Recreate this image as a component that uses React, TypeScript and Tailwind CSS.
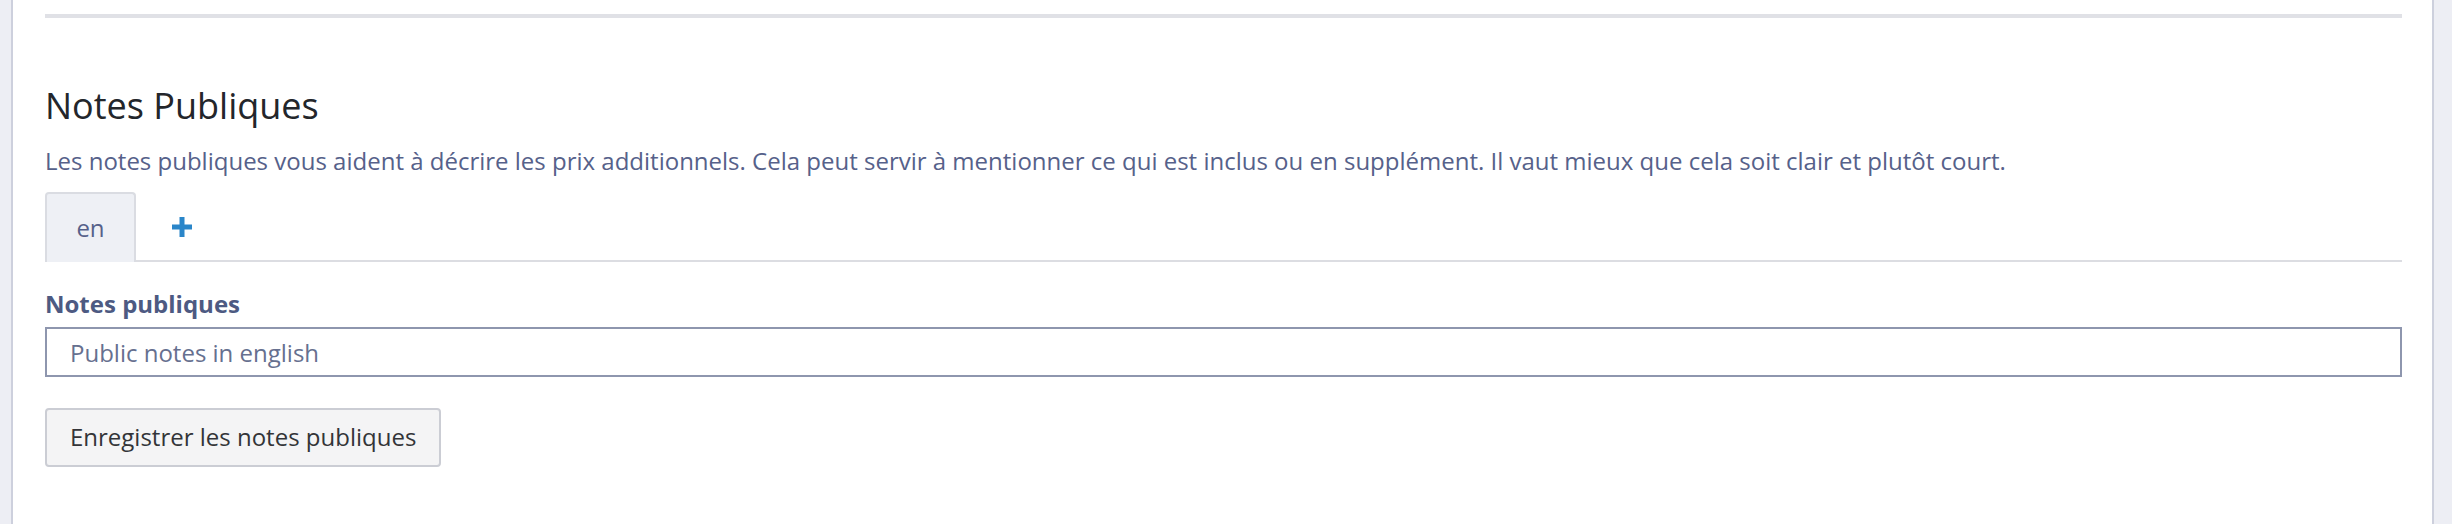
export default function App() {
  return (
    <div className="flex h-[524px] w-full bg-white font-['Open_Sans',sans-serif]">
      {/* left rail */}
      <div className="w-[13px] shrink-0 border-r-2 border-[#cdd0dd] bg-[#edeef4]" />

      <main className="flex-1 pl-[32px] pr-[30px]">
        <div className="mt-[14px] h-[4px] bg-[#e0e1e6]" />

        <section className="pt-[66px]">
          <h2 className="text-[36px] leading-[44px] text-[#23262b]">Notes Publiques</h2>
          <p className="mt-[15px] text-[24px] leading-[36px] text-[#56618a]">
            Les notes publiques vous aident à décrire les prix additionnels. Cela peut servir à mentionner ce qui est
            inclus ou en supplément. Il vaut mieux que cela soit clair et plutôt court.
          </p>

          {/* language tabs */}
          <div className="mt-[13px] flex h-[70px] border-b-2 border-[#dcdde2]">
            <button className="h-[70px] w-[91px] rounded-t-[4px] border-2 border-b-0 border-[#dadce2] bg-[#eef0f5] text-[24px] leading-[36px] text-[#56618a]">
              en
            </button>
            <button className="flex h-[68px] items-center px-[36px] pt-[2px] text-[#2a86c9]">
              <svg width="20" height="20" viewBox="0 0 20 20" fill="currentColor">
                <rect x="0" y="7.5" width="20" height="5" />
                <rect x="7.5" y="0" width="5" height="20" />
              </svg>
            </button>
          </div>

          <label className="mt-[24px] block text-[24px] font-bold leading-[36px] text-[#4d5a82]">Notes publiques</label>
          <input
            defaultValue="Public notes in english"
            className="mt-[5px] block h-[50px] w-full border-2 border-[#8e96ae] px-[23px] text-[24px] text-[#66708f] outline-none"
          />

          <button className="mt-[31px] h-[59px] rounded-[4px] border-2 border-[#cbcdd4] bg-[#f4f4f5] px-[23px] pb-[2px] text-[24px] text-[#333438]">
            Enregistrer les notes publiques
          </button>
        </section>
      </main>

      {/* right rail */}
      <div className="w-[20px] shrink-0 border-l-2 border-[#cdd0dd] bg-[#edeef4]" />
    </div>
  );
}
